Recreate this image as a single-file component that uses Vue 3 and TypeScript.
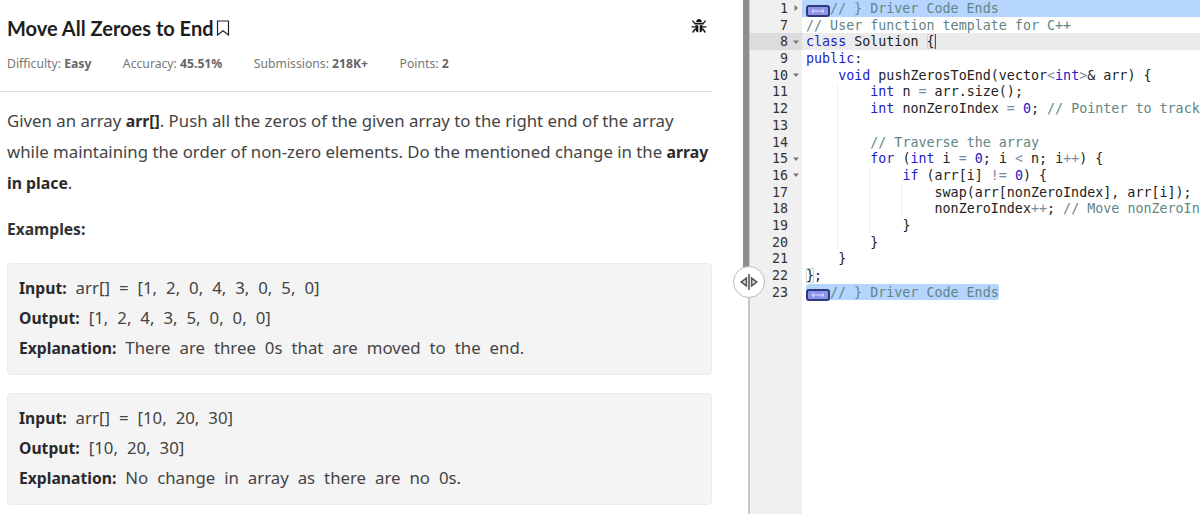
<template>
  <div class="page">
    <section class="problem">
      <header class="title-row">
        <h1 class="title">Move All Zeroes to End</h1>
        <svg class="bookmark" width="14" height="16" viewBox="0 0 14 16" fill="none" stroke="#222" stroke-width="1.2">
          <path d="M1.5 1h11v14L7 10.8 1.5 15z" />
        </svg>
        <svg class="bug" width="16" height="16" viewBox="0 0 18 18" fill="#111">
          <path d="M5.8 4.4C6 2.2 7.3 1 9 1s3 1.2 3.2 3.4z" />
          <path d="M3.8 5.4h10.4v2H3.8zM4.8 8.2h3.4v8C6.2 15.8 4.8 14 4.8 12zM9.8 8.2h3.4V12c0 2-1.4 3.8-3.4 4.2z" />
          <path d="M1 3.4l1.2-1 2.4 3-1 1zM17 3.4l-1.2-1-2.4 3 1 1zM.6 9.2h4v1.6h-4zM13.4 9.2h4v1.6h-4zM1.2 15.8l2.9-3.9 1.2.9-2.8 4zM16.8 15.8l-2.9-3.9-1.2.9 2.8 4z" />
        </svg>
      </header>
      <div class="meta">
        <span v-for="m in meta" :key="m.label" class="meta-item">{{ m.label }}: <b>{{ m.value }}</b></span>
      </div>
      <hr class="rule" />
      <p class="desc">
        Given an array <b>arr[]</b>. Push all the zeros of the given array to the right end of the array
        while maintaining the order of non-zero elements. Do the mentioned change in the <b>array in place</b>.
      </p>
      <h2 class="examples">Examples:</h2>
      <div v-for="(ex, i) in examples" :key="i" class="example">
        <div class="ex-line"><b>Input:</b> {{ ex.input }}</div>
        <div class="ex-line"><b>Output:</b> {{ ex.output }}</div>
        <div class="ex-line"><b>Explanation:</b> {{ ex.explanation }}</div>
      </div>
    </section>

    <div class="splitter">
      <div class="bar"></div>
      <button class="handle" aria-label="Resize">
        <svg width="20" height="18" viewBox="0 0 20 18" fill="#ddd" stroke="#5a5a5a" stroke-width="1.6">
          <path d="M7.4 5v8L2.2 9zM12.6 5v8l5.2-4z" />
          <path d="M10 1v16" fill="none" stroke="#333" stroke-width="1.3" />
        </svg>
      </button>
    </div>

    <section class="editor">
      <div class="guide guide-a"></div>
      <div class="guide guide-b"></div>
      <div class="guide guide-c"></div>
      <div
        v-for="row in rows"
        :key="row.no"
        class="row"
        :class="{ current: row.no === 8, folded: row.fold === 'closed' }"
      >
        <div class="gutter">
          <span class="num">{{ row.no }}</span>
          <span class="fold">
            <svg v-if="row.fold === 'open'" width="6" height="6" viewBox="0 0 6 6" fill="#777"><path d="M0 1.5h6L3 5z" /></svg>
            <svg v-else-if="row.fold === 'closed'" width="6" height="6" viewBox="0 0 6 6" fill="#777"><path d="M1.5 0v6L5 3z" /></svg>
          </span>
        </div>
        <pre class="code"><span v-if="row.marker" class="selected"><span class="fold-widget"><svg width="18" height="6" viewBox="0 0 18 6" fill="none" stroke="#dfe2ff"><path d="M3 3h12M5 1L3 3l2 2M13 1l2 2-2 2" /></svg></span><span class="c">// } Driver Code Ends</span></span><template v-else><span
          v-for="(t, j) in row.tokens"
          :key="j"
          :class="t[0]"
        >{{ t[1] }}</span></template></pre>
      </div>
    </section>
  </div>
</template>

<script setup lang="ts">
type Token = [string, string]

interface Row {
  no: number
  fold?: 'open' | 'closed'
  marker?: boolean
  tokens?: Token[]
}

const meta = [
  { label: 'Difficulty', value: 'Easy' },
  { label: 'Accuracy', value: '45.51%' },
  { label: 'Submissions', value: '218K+' },
  { label: 'Points', value: '2' }
]

const examples = [
  {
    input: 'arr[] = [1, 2, 0, 4, 3, 0, 5, 0]',
    output: '[1, 2, 4, 3, 5, 0, 0, 0]',
    explanation: 'There are three 0s that are moved to the end.'
  },
  {
    input: 'arr[] = [10, 20, 30]',
    output: '[10, 20, 30]',
    explanation: 'No change in array as there are no 0s.'
  }
]

const rows: Row[] = [
  { no: 1, fold: 'closed', marker: true },
  { no: 7, tokens: [['c', '// User function template for C++']] },
  { no: 8, fold: 'open', tokens: [['k', 'class'], ['', ' Solution '], ['cursor caret', '{']] },
  { no: 9, tokens: [['k', 'public'], ['', ':']] },
  { no: 10, fold: 'open', tokens: [['k', '    void'], ['', ' pushZerosToEnd(vector'], ['o', '<'], ['k', 'int'], ['o', '>'], ['', '& arr) {']] },
  { no: 11, tokens: [['k', '        int'], ['', ' n '], ['o', '='], ['', ' arr.size();']] },
  { no: 12, tokens: [['k', '        int'], ['', ' nonZeroIndex '], ['o', '='], ['', ' '], ['n', '0'], ['', '; '], ['c', '// Pointer to track']] },
  { no: 13, tokens: [] },
  { no: 14, tokens: [['c', '        // Traverse the array']] },
  { no: 15, fold: 'open', tokens: [['k', '        for'], ['', ' ('], ['k', 'int'], ['', ' i '], ['o', '='], ['', ' '], ['n', '0'], ['', '; i '], ['o', '<'], ['', ' n; i'], ['o', '++'], ['', ') {']] },
  { no: 16, fold: 'open', tokens: [['k', '            if'], ['', ' (arr[i] '], ['o', '!='], ['', ' '], ['n', '0'], ['', ') {']] },
  { no: 17, tokens: [['', '                swap(arr[nonZeroIndex], arr[i]);']] },
  { no: 18, tokens: [['', '                nonZeroIndex'], ['o', '++'], ['', '; '], ['c', '// Move nonZeroIn']] },
  { no: 19, tokens: [['', '            }']] },
  { no: 20, tokens: [['', '        }']] },
  { no: 21, tokens: [['', '    }']] },
  { no: 22, tokens: [['cursor', '}'], ['', ';']] },
  { no: 23, marker: true }
]
</script>

<style>
html,
body {
  margin: 0;
  background: #fff;
  overflow: hidden;
}
</style>

<style scoped>
.page {
  display: flex;
  width: 1200px;
  height: 514px;
  overflow: hidden;
  font-family: "Noto Sans", sans-serif;
  color: #333;
}

.problem {
  width: 712px;
  flex: none;
  padding-left: 7px;
  box-sizing: border-box;
  margin-right: 31px;
}

.title-row {
  display: flex;
  align-items: center;
  height: 28px;
  margin-top: 14px;
}

.title {
  margin: 0;
  font-family: Lato, sans-serif;
  font-size: 20px;
  font-weight: 700;
  color: #1e1e1e;
}

.bookmark {
  margin-left: 2px;
}

.bug {
  margin: -4px 5px 0 auto;
}

.meta {
  display: flex;
  gap: 31.5px;
  margin-top: 13px;
  font-size: 12.2px;
  line-height: 18px;
  color: #777;
}

.meta b {
  color: #666;
}

.rule {
  margin: 18px 0 0 -7px;
  border: 0;
  border-top: 1px solid #ddd;
}

.desc {
  margin: 13px 0 0;
  font-size: 16.8px;
  line-height: 31px;
  color: #444;
}

.desc b {
  font-size: 15.8px;
  line-height: 1;
  color: #2a2a2a;
}

.examples {
  margin: 19px 0 0;
  font-size: 15.6px;
  line-height: 24px;
  color: #333;
}

.example {
  margin-top: 18px;
  height: 112px;
  box-sizing: border-box;
  padding: 9px 11px;
  background: #f4f4f4;
  border: 1px solid #ececec;
  border-radius: 4px;
  font-size: 16.8px;
  word-spacing: 4.6px;
  color: #444;
}

.examples + .example {
  margin-top: 22px;
}

.ex-line {
  line-height: 30px;
  white-space: nowrap;
}

.ex-line b {
  font-size: 15.7px;
  line-height: 1;
  color: #2a2a2a;
  word-spacing: 0;
}

.splitter {
  position: relative;
  z-index: 2;
  width: 7px;
  flex: none;
}

.bar {
  position: absolute;
  left: 5px;
  top: 0;
  bottom: 0;
  width: 2px;
  background: #c8c8c8;
}

.bar::before {
  content: "";
  position: absolute;
  left: -5px;
  top: 0;
  height: 268px;
  width: 6px;
  background: #8e8e8e;
}

.handle {
  position: absolute;
  left: -10px;
  top: 266px;
  width: 32px;
  height: 32px;
  padding: 0;
  display: flex;
  align-items: center;
  justify-content: center;
  background: #fff;
  border: 1px solid #bbb;
  border-radius: 50%;
}

.editor {
  position: relative;
  flex: 1;
  min-width: 0;
  font-family: "DejaVu Sans Mono", monospace;
  font-size: 13.35px;
  background: linear-gradient(90deg, #f0f0f0 52px, #fff 52px);
  overflow: hidden;
}

.row {
  display: flex;
  height: 16.7px;
  line-height: 18px;
}

.row.current {
  background: #ebebeb;
}

.row.current .gutter {
  background: #dcdcdc;
}

.gutter {
  width: 52px;
  flex: none;
  display: flex;
  justify-content: flex-end;
  color: #333;
}

.fold {
  width: 14px;
  flex: none;
  display: flex;
  align-items: center;
  padding-left: 5px;
  box-sizing: border-box;
}

.code {
  margin: 0 0 0 4px;
  font: inherit;
  line-height: inherit;
  color: #222;
  white-space: pre;
}

.k {
  color: #2222c4;
}

.c {
  color: #5f8585;
}

.n {
  color: #2222c4;
}

.o {
  color: #7a8aa0;
}

.cursor {
  box-shadow: inset 0 0 0 1px #d4d4d4;
}

.caret {
  border-right: 1px solid #555;
}

.selected {
  display: inline-block;
  height: 16.7px;
  background: #b5d5ff;
  border-radius: 3px;
}

.fold-widget {
  display: inline-flex;
  align-items: center;
  justify-content: center;
  width: 24px;
  height: 12px;
  box-sizing: border-box;
  border: 2px solid #2f3a7a;
  border-radius: 3px;
  background: #8f94e8;
  vertical-align: -1px;
}

.folded {
  background: #b5d5ff;
}

.folded .gutter {
  background: #f0f0f0;
}

.guide {
  position: absolute;
  width: 1px;
  background: #efefef;
}

.guide-a {
  left: 87px;
  top: 84px;
  height: 166px;
}

.guide-b {
  left: 119px;
  top: 167px;
  height: 66px;
}

.guide-c {
  left: 151px;
  top: 184px;
  height: 33px;
}
</style>
